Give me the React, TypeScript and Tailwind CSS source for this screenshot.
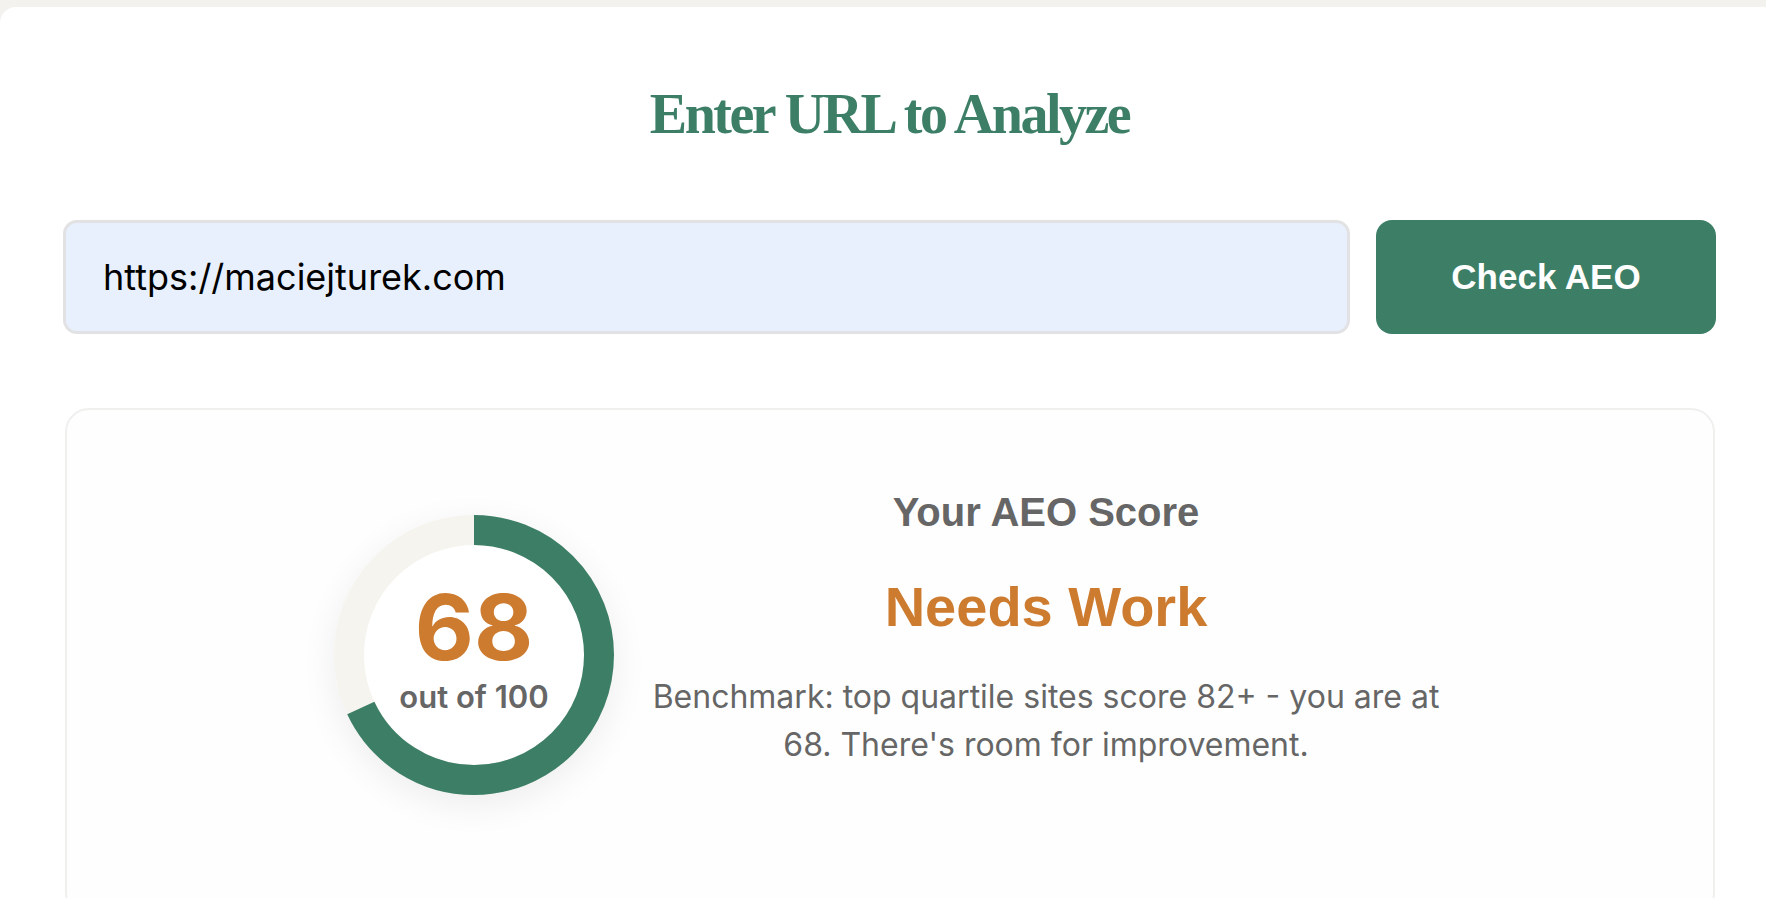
import React from 'react';

const SCORE = 68;
const RADIUS = 125;
const CIRC = 2 * Math.PI * RADIUS;

const ScoreRing: React.FC<{ score: number }> = ({ score }) => {
  const filled = (score / 100) * CIRC;
  return (
    <div className="relative w-[280px] h-[280px] shrink-0 rounded-full shadow-[0_10px_36px_rgba(0,0,0,0.07)]">
      <svg width="280" height="280" viewBox="0 0 280 280" className="-rotate-90">
        <circle cx="140" cy="140" r="110" fill="#ffffff" />
        <circle cx="140" cy="140" r={RADIUS} fill="none" stroke="#f5f4ef" strokeWidth="30" />
        <circle
          cx="140"
          cy="140"
          r={RADIUS}
          fill="none"
          stroke="#3d7f66"
          strokeWidth="30"
          strokeDasharray={`${filled} ${CIRC}`}
        />
      </svg>
      <div className="absolute inset-0 flex flex-col items-center justify-center pb-[16px] font-['Inter',sans-serif]">
        <span className="text-[91px] leading-[96px] font-bold text-[#cd7b2f]">{score}</span>
        <span className="text-[31px] leading-[36px] font-semibold text-[#666666] mt-[4px]">out of 100</span>
      </div>
    </div>
  );
};

export default function App() {
  return (
    <div className="min-h-screen bg-[#f3f2ee] pt-[7px] overflow-hidden">
      <div className="bg-white rounded-tl-[16px] min-h-[891px] pl-[63px] pr-[50px] pt-[74px]">
        <h1 className="text-center font-['Liberation_Serif',serif] font-bold text-[56px] leading-[67px] tracking-[-2.5px] text-[#3d7f66]">
          Enter URL to Analyze
        </h1>

        <div className="flex gap-[26px] mt-[72px]">
          <input
            type="text"
            defaultValue="https://maciejturek.com"
            className="flex-1 h-[114px] rounded-[14px] border-[3px] border-[#e2e2e4] bg-[#e8f0fe] px-[37px] font-['Inter',sans-serif] text-[36px] text-black outline-none"
          />
          <button
            type="button"
            className="w-[340px] h-[114px] rounded-[16px] bg-[#3d7f66] text-white font-['Liberation_Sans',Arial,sans-serif] font-bold text-[35px]"
          >
            Check AEO
          </button>
        </div>

        <div className="mt-[74px] mr-[1px] ml-[2px] rounded-[24px] border-2 border-[#f0f0ef] bg-[#fefefe] pt-[78px] pb-[120px]">
          <div className="flex justify-center items-start gap-[32px]">
            <div className="mt-[27px]">
              <ScoreRing score={SCORE} />
            </div>
            <div className="w-[800px] flex flex-col items-center text-center">
              <h2 className="font-['Liberation_Sans',Arial,sans-serif] font-bold text-[40px] leading-[48px] text-[#666666]">
                Your AEO Score
              </h2>
              <p className="mt-[37px] font-['Liberation_Sans',Arial,sans-serif] font-bold text-[56px] leading-[67px] text-[#cd7b2f]">
                Needs Work
              </p>
              <p className="mt-[33px] font-['Inter',sans-serif] text-[32px] leading-[48px] text-[#666666]">
                Benchmark: top quartile sites score 82+ - you are at {SCORE}. There's room for improvement.
              </p>
            </div>
          </div>
        </div>
      </div>
    </div>
  );
}
